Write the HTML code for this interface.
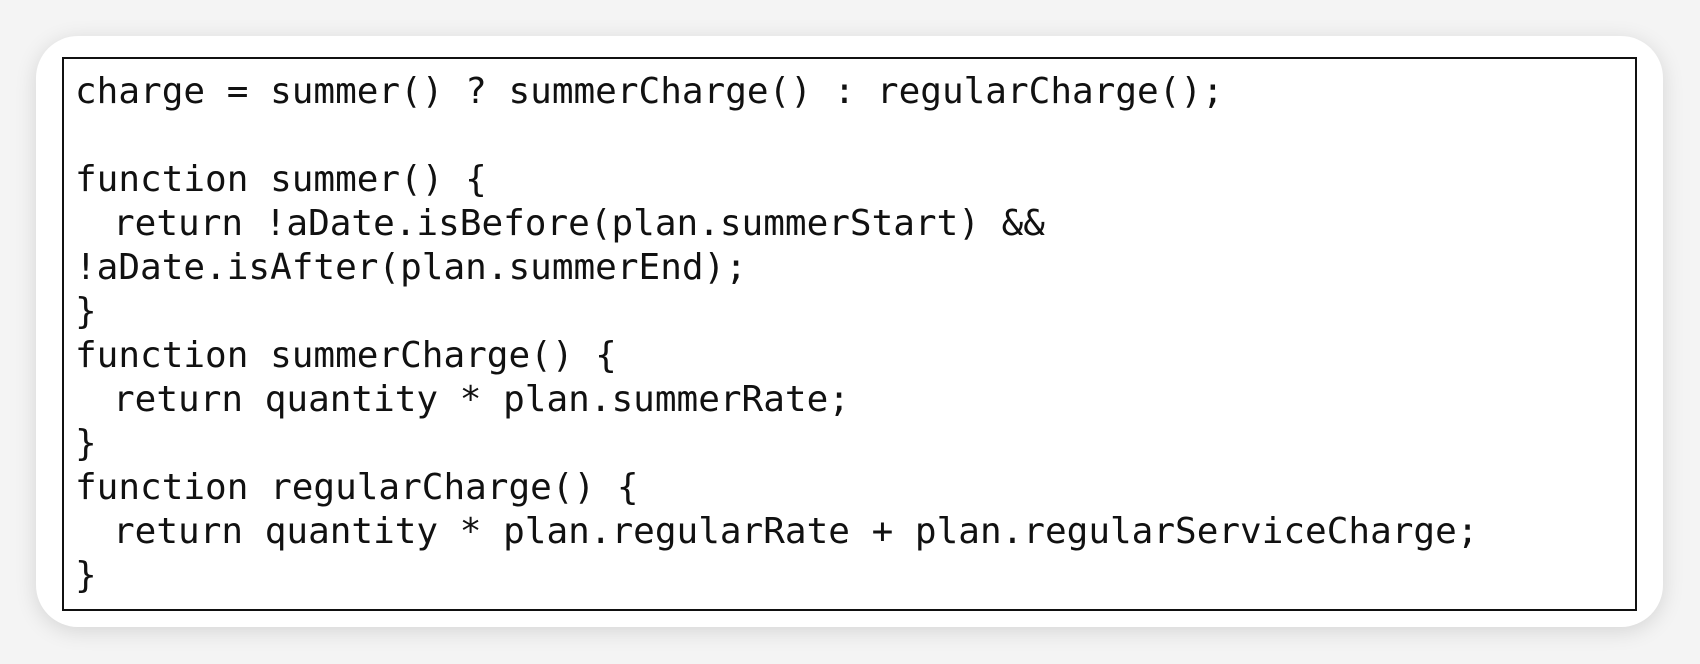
<!DOCTYPE html>
<html><head><meta charset="utf-8">
<style>
html,body{margin:0;padding:0;}
body{width:1700px;height:664px;background:#f4f4f4;position:relative;overflow:hidden;}
.card{position:absolute;left:36px;top:36px;width:1627px;height:591px;background:#fff;border-radius:42px;box-shadow:0 4px 22px rgba(0,0,0,0.13);}
.box{position:absolute;left:62px;top:57px;width:1571px;height:550px;border:2px solid #111;box-sizing:content-box;}
pre{margin:0;position:absolute;left:11px;top:11px;font-family:"DejaVu Sans Mono","Liberation Mono",monospace;font-size:36px;line-height:44px;color:#111;letter-spacing:0;}
.i{padding-left:38px;}
</style></head><body>
<div class="card"></div>
<div class="box"><pre>charge = summer() ? summerCharge() : regularCharge();

function summer() {
<span class="i">return !aDate.isBefore(plan.summerStart) &amp;&amp;</span>
!aDate.isAfter(plan.summerEnd);
}
function summerCharge() {
<span class="i">return quantity * plan.summerRate;</span>
}
function regularCharge() {
<span class="i">return quantity * plan.regularRate + plan.regularServiceCharge;</span>
}</pre></div>
</body></html>
